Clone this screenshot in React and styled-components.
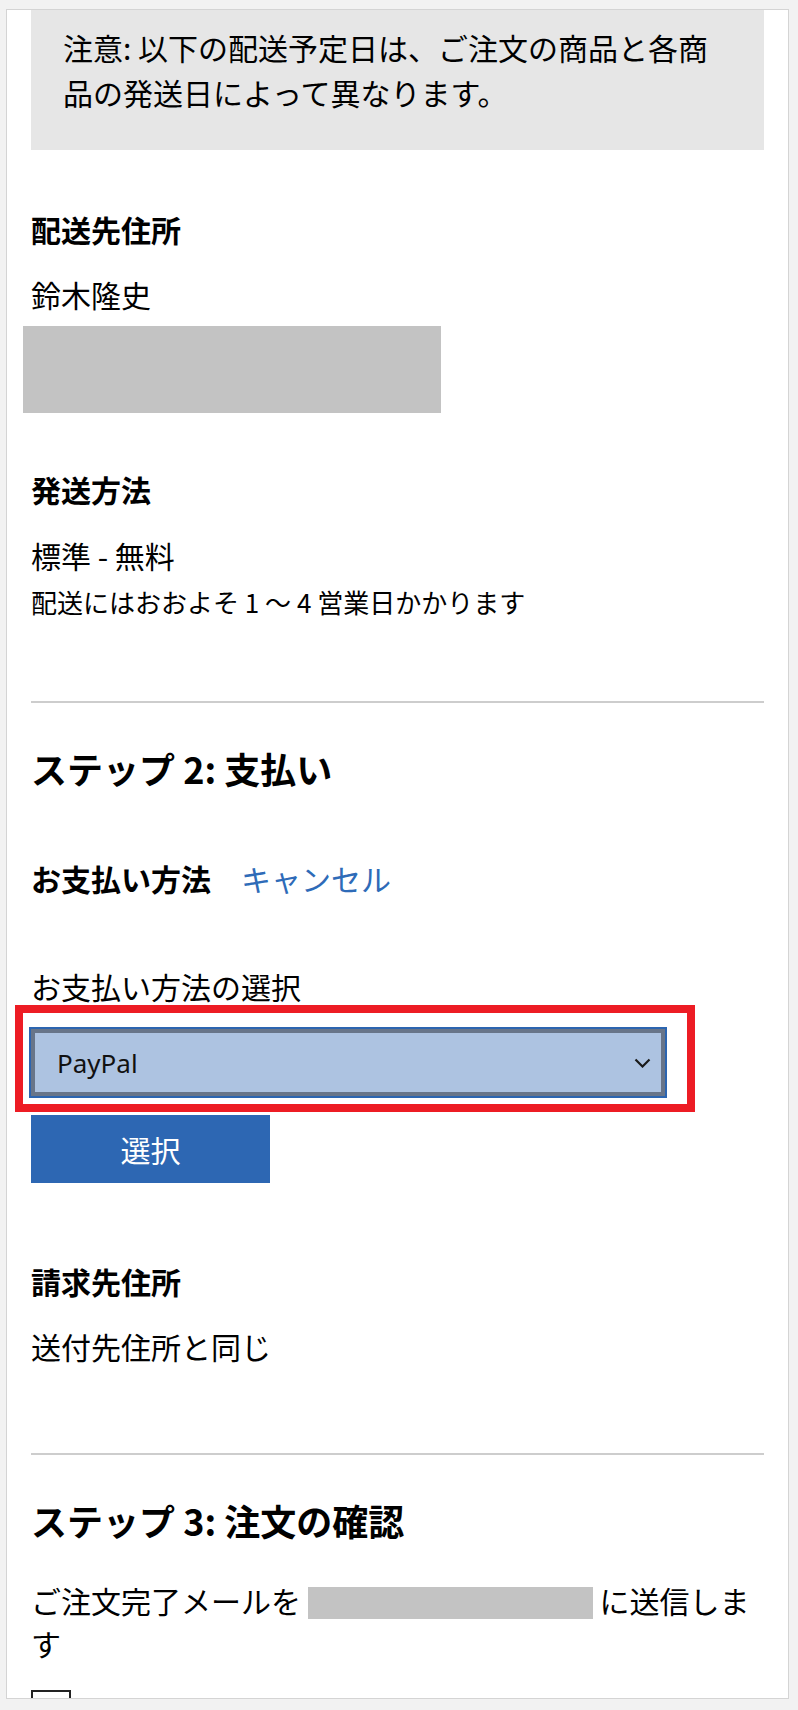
import React from 'react';
import styled, { createGlobalStyle } from 'styled-components';

const GlobalStyle = createGlobalStyle`
  html, body {
    margin: 0;
    padding: 0;
    background: #f2f2f2;
  }
  body {
    font-family: "Noto Sans CJK JP", "Noto Sans", sans-serif;
    color: #000;
  }
`;

const Page = styled.div`
  height: 1710px;
  padding: 9px 9px 0 6px;
  box-sizing: border-box;
`;

const Card = styled.div`
  height: 1690px;
  box-sizing: border-box;
  overflow: hidden;
  background: #fff;
  border: 1px solid #d4d4d4;
  padding: 0 24px;
`;

const Notice = styled.div`
  background: #e6e6e6;
  padding: 15px 32px 35px;
  font-size: 30px;
  line-height: 45px;
`;

const Heading = styled.div`
  margin-top: ${(p) => p.$top}px;
  font-size: 30px;
  line-height: 45px;
  font-weight: 700;
`;

const Text = styled.div`
  margin-top: ${(p) => p.$top}px;
  font-size: 30px;
  line-height: 45px;
`;

const SmallText = styled.div`
  margin-top: ${(p) => p.$top}px;
  font-size: 26px;
  line-height: 39px;
`;

const Redacted = styled.div`
  margin-top: 9px;
  margin-left: -8px;
  width: 418px;
  height: 87px;
  background: #c3c3c3;
`;

const Divider = styled.hr`
  margin: ${(p) => p.$top}px 0 0;
  border: none;
  height: 2px;
  background: #cdcdcd;
`;

const StepTitle = styled.h2`
  margin: ${(p) => p.$top}px 0 0;
  font-size: 36px;
  line-height: 50px;
  font-weight: 700;
`;

const PaymentRow = styled.div`
  margin-top: 63px;
  display: flex;
  align-items: center;
  gap: 30px;
  font-size: 30px;
  line-height: 45px;
`;

const Strong = styled.span`
  font-weight: 700;
`;

const Link = styled.a`
  color: #2e6bb8;
  text-decoration: none;
  cursor: pointer;
`;

const SelectWrap = styled.div`
  position: relative;
  margin-top: 18px;
  margin-left: -2px;
  width: 638px;
`;

const Highlight = styled.div`
  position: absolute;
  top: -22px;
  left: -14px;
  width: 680px;
  height: 107px;
  box-sizing: border-box;
  border: 8px solid #ed1c24;
  pointer-events: none;
`;

const SelectBox = styled.div`
  height: 71px;
  box-sizing: border-box;
  display: flex;
  align-items: center;
  justify-content: space-between;
  padding: 0 14px 0 26px;
  background: #adc3e1;
  border: 2px solid #2c65b0;
  box-shadow: inset 0 0 0 4px #687589;
  font-family: "Noto Sans", "Liberation Sans", sans-serif;
  font-size: 26px;
  color: #111;
`;

const Button = styled.button`
  display: block;
  margin-top: 17px;
  width: 239px;
  height: 68px;
  border: none;
  background: #2d67b3;
  color: #fff;
  font-family: inherit;
  font-size: 30px;
  cursor: pointer;
`;

const Paragraph = styled.p`
  margin: 34px 0 0;
  font-size: 30px;
  line-height: 43px;
`;

const Mask = styled.span`
  display: inline-block;
  width: 285px;
  height: 32px;
  background: #c3c3c3;
  vertical-align: -6px;
`;

const CheckRow = styled.label`
  margin-top: 25px;
  display: flex;
  align-items: flex-start;
  gap: 20px;
  font-size: 26px;
  line-height: 40px;
`;

const CheckBox = styled.span`
  flex: none;
  width: 40px;
  height: 40px;
  box-sizing: border-box;
  border: 2px solid #222;
`;

const Chevron = () => (
  <svg width="17" height="10" viewBox="0 0 17 10" fill="none">
    <polyline points="1.5,1.5 8.5,8.5 15.5,1.5" stroke="#1a1a1a" strokeWidth="2.2" />
  </svg>
);

export default function App() {
  return (
    <Page>
      <GlobalStyle />
      <Card>
        <Notice>注意: 以下の配送予定日は、ご注文の商品と各商品の発送日によって異なります。</Notice>

        <Heading $top={57}>配送先住所</Heading>
        <Text $top={20}>鈴木隆史</Text>
        <Redacted />

        <Heading $top={54}>発送方法</Heading>
        <Text $top={21}>標準 - 無料</Text>
        <SmallText $top={4}>配送にはおおよそ 1 ～ 4 営業日かかります</SmallText>

        <Divider $top={80} />

        <StepTitle $top={40}>ステップ 2: 支払い</StepTitle>
        <PaymentRow>
          <Strong>お支払い方法</Strong>
          <Link>キャンセル</Link>
        </PaymentRow>
        <Text $top={63}>お支払い方法の選択</Text>
        <SelectWrap>
          <SelectBox>
            <span>PayPal</span>
            <Chevron />
          </SelectBox>
          <Highlight />
        </SelectWrap>
        <Button>選択</Button>

        <Heading $top={76}>請求先住所</Heading>
        <Text $top={20}>送付先住所と同じ</Text>

        <Divider $top={84} />

        <StepTitle $top={40}>ステップ 3: 注文の確認</StepTitle>
        <Paragraph>
          ご注文完了メールを <Mask /> に送信します
        </Paragraph>
        <CheckRow>
          <CheckBox />
          <span>私は販売条件とプライバシーに関する声明に同意します</span>
        </CheckRow>
      </Card>
    </Page>
  );
}
